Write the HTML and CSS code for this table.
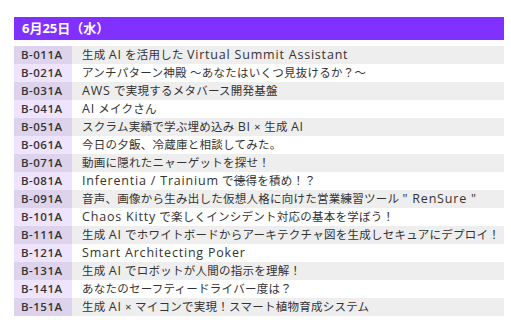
FILE: index.html
```html
<!DOCTYPE html>
<html lang="ja">
<head>
<meta charset="utf-8">
<link rel="stylesheet" href="styles.css">
</head>
<body>
<div class="schedule">
  <div class="day">6月25日（水）</div>
  <div class="rows">
    <div class="row"><span class="code">B-011A</span><span class="title">生成 <span class="en">AI</span> を活用した <span class="en">Virtual Summit Assistant</span></span></div>
    <div class="row"><span class="code">B-021A</span><span class="title">アンチパターン神殿 ～あなたはいくつ見抜けるか？～</span></div>
    <div class="row"><span class="code">B-031A</span><span class="title"><span class="en">AWS</span> で実現するメタバース開発基盤</span></div>
    <div class="row"><span class="code">B-041A</span><span class="title"><span class="en">AI</span> メイクさん</span></div>
    <div class="row"><span class="code">B-051A</span><span class="title">スクラム実績で学ぶ埋め込み <span class="en">BI</span> × 生成 <span class="en">AI</span></span></div>
    <div class="row"><span class="code">B-061A</span><span class="title">今日の夕飯、冷蔵庫と相談してみた。</span></div>
    <div class="row"><span class="code">B-071A</span><span class="title">動画に隠れたニャーゲットを探せ！</span></div>
    <div class="row"><span class="code">B-081A</span><span class="title"><span class="en">Inferentia / Trainium</span> で<s>徳</s>得を積め！？</span></div>
    <div class="row"><span class="code">B-091A</span><span class="title">音声、画像から生み出した仮想人格に向けた営業練習ツール <span class="en">" RenSure "</span></span></div>
    <div class="row"><span class="code">B-101A</span><span class="title"><span class="en">Chaos Kitty</span> で楽しくインシデント対応の基本を学ぼう！</span></div>
    <div class="row"><span class="code">B-111A</span><span class="title">生成 <span class="en">AI</span> でホワイトボードからアーキテクチャ図を生成しセキュアにデプロイ！</span></div>
    <div class="row"><span class="code">B-121A</span><span class="title"><span class="en">Smart Architecting Poker</span></span></div>
    <div class="row"><span class="code">B-131A</span><span class="title">生成 <span class="en">AI</span> でロボットが人間の指示を理解！</span></div>
    <div class="row"><span class="code">B-141A</span><span class="title">あなたのセーフティードライバー度は？</span></div>
    <div class="row"><span class="code">B-151A</span><span class="title">生成 <span class="en">AI</span> × マイコンで実現！スマート植物育成システム</span></div>
  </div>
</div>
</body>
</html>
```
FILE: styles.css
```css
html, body {
  margin: 0;
  padding: 0;
  background: #ffffff;
}
body {
  font-family: "Open Sans", "Noto Sans CJK JP", sans-serif;
  color: #333333;
}
.schedule {
  width: 490px;
  margin: 17px 0 0 14px;
  display: flex;
  flex-direction: column;
  gap: 6px;
}
.day {
  height: 23px;
  line-height: 23px;
  padding-left: 8px;
  background: #8031ff;
  color: #ffffff;
  font-weight: 700;
  font-size: 13px;
}
.rows {
  display: flex;
  flex-direction: column;
}
.row {
  display: grid;
  grid-template-columns: 58px 1fr;
  height: 18px;
  line-height: 18px;
  font-size: 11.5px;
  letter-spacing: 0.25px;
}
.row:nth-child(odd) .code { background: #ddd3ec; }
.row:nth-child(even) .code { background: #eee4fd; }
.row:nth-child(odd) .title { background: #eeeeee; }
.row:nth-child(even) .title { background: #ffffff; }
.code {
  padding-left: 7px;
  font-weight: 600;
  letter-spacing: 0.5px;
}
.title {
  padding-left: 10px;
  white-space: nowrap;
}
.en {
  font-size: 12.5px;
  font-weight: 500;
  letter-spacing: 0.8px;
}
```
